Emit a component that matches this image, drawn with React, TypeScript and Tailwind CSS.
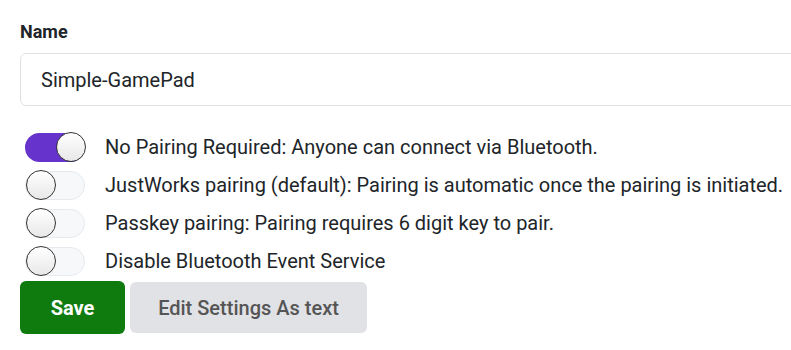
import React, { useState } from "react";

const options = [
  "No Pairing Required: Anyone can connect via Bluetooth.",
  "JustWorks pairing (default): Pairing is automatic once the pairing is initiated.",
  "Passkey pairing: Pairing requires 6 digit key to pair.",
  "Disable Bluetooth Event Service",
];

const Toggle = ({ on, onClick }: { on: boolean; onClick: () => void }) => (
  <button
    onClick={onClick}
    className={
      "relative w-[60px] h-[29px] rounded-full shrink-0 " +
      (on ? "bg-[#6633cc]" : "bg-[#f6f8fa] border border-[#e6eaee]")
    }
  >
    <span
      className={
        "absolute top-1/2 -translate-y-1/2 w-[30px] h-[30px] rounded-full border border-[#333] bg-gradient-to-b from-white to-[#e8e8e8] " +
        (on ? "right-[-1px]" : "left-0")
      }
    />
  </button>
);

export default function App() {
  const [checked, setChecked] = useState<boolean[]>([true, false, false, false]);

  return (
    <div
      className="w-[791px] h-[350px] overflow-hidden bg-white pl-5 pt-[18px] text-[#212529]"
      style={{ fontFamily: "Roboto, 'Liberation Sans', sans-serif" }}
    >
      <div className="text-[18px] font-bold leading-[27px] mb-2">Name</div>
      <input
        readOnly
        value="Simple-GamePad"
        className="w-[820px] h-[53px] border border-[#dee2e6] rounded-[6px] px-5 text-[20px] text-[#212529] outline-none"
      />

      <div className="mt-[22px] flex flex-col">
        {options.map((label, i) => (
          <div key={i} className="h-[38px] flex items-center gap-5 pl-[5px]">
            <Toggle
              on={checked[i]}
              onClick={() =>
                setChecked((prev) => prev.map((v, j) => (j === i ? !v : v)))
              }
            />
            <span className="text-[20px] leading-none whitespace-nowrap">{label}</span>
          </div>
        ))}
      </div>

      <div className="mt-px flex items-center gap-[5px]">
        <button className="w-[105px] h-[53px] rounded-[6px] bg-[#0f7b0f] text-white text-[20px] font-bold">
          Save
        </button>
        <button className="w-[237px] h-[51px] rounded-[6px] bg-[#e1e2e5] text-[#555] text-[20px] font-medium">
          Edit Settings As text
        </button>
      </div>
    </div>
  );
}
